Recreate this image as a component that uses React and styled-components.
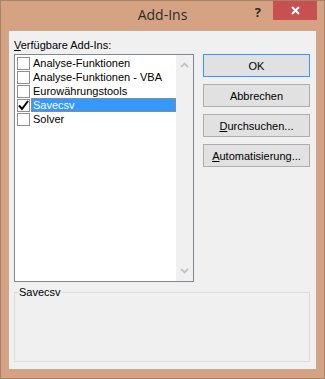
import React from 'react'
import styled, { createGlobalStyle } from 'styled-components'

const GlobalStyle = createGlobalStyle`
body {
  margin: 0;
  font-family: "Liberation Sans", Arial, sans-serif;
  font-size: 11px;
  color: #000;
}
`

const addins = [
  { name: 'Analyse-Funktionen', checked: false },
  { name: 'Analyse-Funktionen - VBA', checked: false },
  { name: 'Eurowährungstools', checked: false },
  { name: 'Savecsv', checked: true, selected: true },
  { name: 'Solver', checked: false },
]

const Chevron = ({ down }) => (
  <svg width="9" height="6" viewBox="0 0 9 6">
    <path
      d={down ? 'M1 1 L4.5 4.5 L8 1' : 'M1 5 L4.5 1.5 L8 5'}
      fill="none"
      stroke="#c3c3c3"
      strokeWidth="1.8"
    />
  </svg>
)

const App = () => {
  return (
    <>
      <GlobalStyle />
      <Window>
        <TitleBar>
          <span />
          <Title>Add-Ins</Title>
          <Controls>
            <Help>?</Help>
            <Close>
              <svg width="9" height="9" viewBox="0 0 9 9">
                <path d="M1 1 L8 8 M8 1 L1 8" stroke="#fff" strokeWidth="2" />
              </svg>
            </Close>
          </Controls>
        </TitleBar>
        <Content>
          <TopRow>
            <LeftCol>
              <Label><u>V</u>erfügbare Add-Ins:</Label>
              <ListBox>
                <Items>
                  {addins.map((a) => (
                    <Row key={a.name}>
                      <Box>
                        {a.checked && (
                          <svg width="13" height="13" viewBox="0 0 13 13">
                            <path d="M2 6.5 L5 10 L11 2" fill="none" stroke="#000" strokeWidth="2" />
                          </svg>
                        )}
                      </Box>
                      <ItemText $selected={a.selected}>{a.name}</ItemText>
                    </Row>
                  ))}
                </Items>
                <ScrollBar>
                  <Arrow><Chevron /></Arrow>
                  <Arrow><Chevron down /></Arrow>
                </ScrollBar>
              </ListBox>
            </LeftCol>
            <ButtonCol>
              <Button $default>OK</Button>
              <Button>Abbrechen</Button>
              <Button><u>D</u>urchsuchen...</Button>
              <Button><u>A</u>utomatisierung...</Button>
            </ButtonCol>
          </TopRow>
          <Group>
            <Legend>Savecsv</Legend>
          </Group>
        </Content>
      </Window>
    </>
  )
}

const Window = styled.div`
width: 325px;
height: 379px;
box-sizing: border-box;
border: 1px solid #a98167;
background: #d5a384;
display: flex;
flex-direction: column;
`

const TitleBar = styled.div`
height: 29px;
display: grid;
grid-template-columns: 1fr auto 1fr;
`

const Title = styled.div`
font-family: "Open Sans", "Noto Sans", sans-serif;
font-size: 14px;
color: #2b2b2b;
align-self: center;
padding-bottom: 2px;
`

const Controls = styled.div`
display: flex;
justify-content: flex-end;
align-items: flex-start;
gap: 12px;
margin-right: 7px;
`

const Help = styled.div`
font-family: "Open Sans", "Noto Sans", sans-serif;
font-weight: bold;
font-size: 13px;
color: #2b2b2b;
line-height: 16px;
margin-top: 3px;
`

const Close = styled.div`
width: 44px;
height: 19px;
background: #c75050;
display: flex;
align-items: center;
justify-content: center;
`

const Content = styled.div`
flex: 1;
margin: 0 7px 8px 7px;
background: #f0f0f0;
box-shadow: inset 0 0 0 1px #c7a892;
padding: 0 7px 8px 6px;
display: flex;
flex-direction: column;
`

const TopRow = styled.div`
display: flex;
justify-content: space-between;
`

const LeftCol = styled.div`
width: 180px;
display: flex;
flex-direction: column;
`

const Label = styled.div`
height: 24px;
box-sizing: border-box;
padding-top: 9px;
line-height: 13px;
`

const ListBox = styled.div`
height: 228px;
box-sizing: border-box;
border: 1px solid #828790;
display: flex;
`

const Items = styled.div`
flex: 1;
background: #fff;
padding: 1px 0 0 2px;
`

const Row = styled.div`
height: 14px;
display: flex;
align-items: center;
`

const Box = styled.div`
width: 13px;
height: 13px;
box-sizing: border-box;
border: 1px solid #8f8f8f;
background: #fff;
display: flex;
align-items: center;
justify-content: center;
svg { flex: none; }
`

const ItemText = styled.div`
flex: 1;
height: 14px;
line-height: 12px;
box-sizing: border-box;
margin-left: 1px;
padding: 0 1px;
border: 1px dotted ${(p) => (p.$selected ? '#d9822b' : 'transparent')};
background: ${(p) => (p.$selected ? '#3399ff' : 'transparent')};
color: ${(p) => (p.$selected ? '#fff' : '#000')};
`

const ScrollBar = styled.div`
width: 17px;
background: #f0f0f0;
display: flex;
flex-direction: column;
justify-content: space-between;
`

const Arrow = styled.div`
height: 20px;
display: flex;
align-items: center;
justify-content: center;
`

const ButtonCol = styled.div`
width: 107px;
padding-top: 24px;
display: flex;
flex-direction: column;
gap: 7px;
`

const Button = styled.div`
height: 23px;
box-sizing: border-box;
border: 1px solid ${(p) => (p.$default ? '#3399ff' : '#adadad')};
background: #e1e1e1;
display: flex;
align-items: center;
justify-content: center;
`

const Group = styled.fieldset`
flex: 1;
margin: 4px 0 0 0;
padding: 0 4px;
border: 1px solid #dcdcdc;
min-width: 0;
`

const Legend = styled.legend`
padding: 0;
line-height: 13px;
`

export default App
